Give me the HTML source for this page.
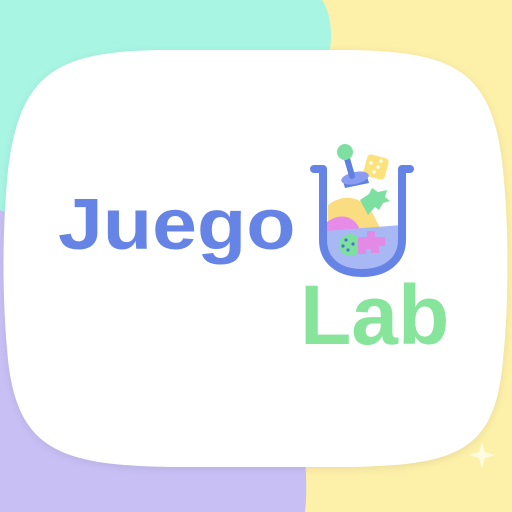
<!DOCTYPE html>
<html><head><style>
html,body{margin:0;padding:0}
body{width:512px;height:512px;position:relative;overflow:hidden;background:#fdf0a8;font-family:"Liberation Sans","DejaVu Sans",sans-serif}
.t{position:absolute;font-weight:bold;white-space:nowrap;transform-origin:0 0}
</style></head><body>
<svg width="512" height="512" style="position:absolute;left:0;top:0">
<path d="M0 0H322C335 20 332 50 325 70L0 220Z" fill="#a8f5e3"/>
<path d="M0 210L280 330C300 400 310 470 305 512H0Z" fill="#c8c0f5"/>
<path d="M160 50C60 52 20 70 8 170C2 230 2 300 8 360C18 450 60 465 170 467H350C460 465 495 450 503 360C509 300 509 230 503 170C493 70 455 52 350 50Z" fill="#fff" style="filter:drop-shadow(0 2px 4px rgba(0,0,0,0.08))"/>
<g>
<path d="M328 205C345 192 362 198 372 212L380 228C360 230 345 226 328 228Z" fill="#fadd80"/>
<path d="M327 222C340 212 355 216 360 230L327 232Z" fill="#e88ae8"/>
<path d="M325 231L402 225V242C402 262 390 272 362 272C338 272 325 262 325 245Z" fill="#a8b8f5"/>
<circle cx="350" cy="245" r="11" fill="#7ee0a0"/>
<circle cx="346" cy="240" r="1.6" fill="#5070d0"/><circle cx="353" cy="244" r="1.6" fill="#5070d0"/><circle cx="348" cy="250" r="1.6" fill="#5070d0"/><circle cx="343" cy="246" r="1.6" fill="#5070d0"/>
<path d="M358 237h9v-6h8v6h10v9h-6v7h-8v-4h-5v5h-8z" fill="#e38ae6"/>
<path d="M360 200l9 -6 3 -6 6 4 9 -2 -2 7 5 4 -7 2 -4 7 -4 -3 -7 8z" fill="#7ee0a0"/>
<rect x="365" y="156" width="22" height="22" rx="4" fill="#fbe27a" transform="rotate(15 376 167)"/>
<circle cx="371" cy="163" r="1.7" fill="#fff"/><circle cx="378" cy="167" r="1.7" fill="#fff"/><circle cx="374" cy="172" r="1.7" fill="#fff"/><circle cx="381" cy="161" r="1.7" fill="#fff"/>
<path d="M342 178l24 -5 3 10 -24 5z" fill="#6080e0"/>
<ellipse cx="355" cy="178" rx="14" ry="6" fill="#8a9cf0" transform="rotate(-12 355 178)"/>
<line x1="346" y1="155" x2="352" y2="176" stroke="#6080e0" stroke-width="6" stroke-linecap="round"/>
<circle cx="345" cy="152" r="8" fill="#7ee0a0"/>
<path d="M314 169H323V240C323 260 338 273 362 273C386 273 402 260 402 240V169H410" fill="none" stroke="#6684e6" stroke-width="8" stroke-linecap="round" stroke-linejoin="round"/>
</g>
<path d="M482 442l3 10 10 3 -10 3 -3 10 -3 -10 -10 -3 10 -3z" fill="#fffbe0"/>
</svg>
<div class="t" style="left:58px;top:184px;font-size:72px;color:#6684e6;transform:scaleX(1.12)">Juego</div>
<div class="t" style="left:300px;top:267px;font-size:84px;color:#86e59a">Lab</div>
</body></html>
